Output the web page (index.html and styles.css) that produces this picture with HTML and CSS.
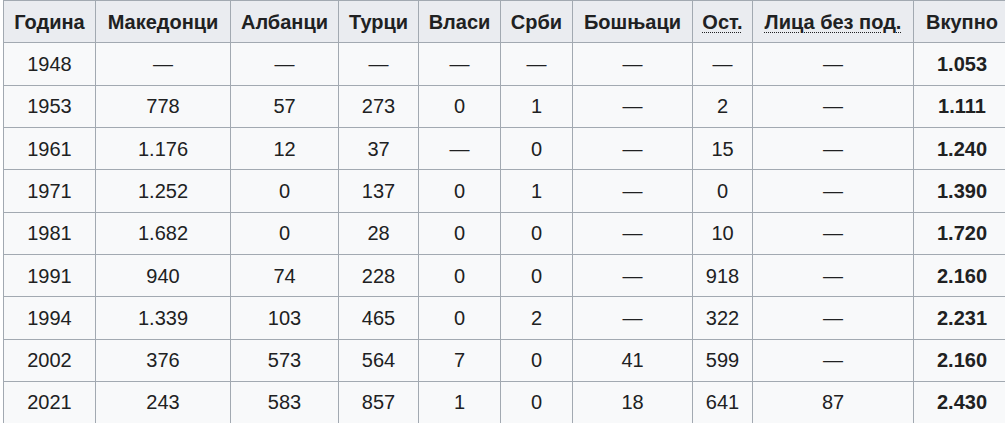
FILE: index.html
```html
<!DOCTYPE html>
<html lang="mk">
<head>
<meta charset="utf-8">
<title>Население</title>
<link rel="stylesheet" href="styles.css">
</head>
<body>
<table class="wikitable">
  <colgroup>
    <col class="c-year">
    <col class="c-mk">
    <col class="c-al">
    <col class="c-tr">
    <col class="c-vl">
    <col class="c-sr">
    <col class="c-bo">
    <col class="c-ost">
    <col class="c-bez">
    <col class="c-total">
  </colgroup>
  <thead>
    <tr>
      <th>Година</th>
      <th>Македонци</th>
      <th>Албанци</th>
      <th>Турци</th>
      <th>Власи</th>
      <th>Срби</th>
      <th>Бошњаци</th>
      <th><abbr class="abbr" title="Останати">Ост.</abbr></th>
      <th><abbr class="abbr" title="Лица без податок">Лица без под.</abbr></th>
      <th>Вкупно</th>
    </tr>
  </thead>
  <tbody>
    <tr><td>1948</td><td>—</td><td>—</td><td>—</td><td>—</td><td>—</td><td>—</td><td>—</td><td>—</td><td class="total">1.053</td></tr>
    <tr><td>1953</td><td>778</td><td>57</td><td>273</td><td>0</td><td>1</td><td>—</td><td>2</td><td>—</td><td class="total">1.111</td></tr>
    <tr><td>1961</td><td>1.176</td><td>12</td><td>37</td><td>—</td><td>0</td><td>—</td><td>15</td><td>—</td><td class="total">1.240</td></tr>
    <tr><td>1971</td><td>1.252</td><td>0</td><td>137</td><td>0</td><td>1</td><td>—</td><td>0</td><td>—</td><td class="total">1.390</td></tr>
    <tr><td>1981</td><td>1.682</td><td>0</td><td>28</td><td>0</td><td>0</td><td>—</td><td>10</td><td>—</td><td class="total">1.720</td></tr>
    <tr><td>1991</td><td>940</td><td>74</td><td>228</td><td>0</td><td>0</td><td>—</td><td>918</td><td>—</td><td class="total">2.160</td></tr>
    <tr><td>1994</td><td>1.339</td><td>103</td><td>465</td><td>0</td><td>2</td><td>—</td><td>322</td><td>—</td><td class="total">2.231</td></tr>
    <tr><td>2002</td><td>376</td><td>573</td><td>564</td><td>7</td><td>0</td><td>41</td><td>599</td><td>—</td><td class="total">2.160</td></tr>
    <tr><td>2021</td><td>243</td><td>583</td><td>857</td><td>1</td><td>0</td><td>18</td><td>641</td><td>87</td><td class="total">2.430</td></tr>
  </tbody>
</table>
</body>
</html>
```

FILE: styles.css
```css
html, body {
  margin: 0;
  padding: 0;
  background: #ffffff;
}

body {
  padding-left: 3px;
  font-family: "Liberation Sans", Arial, sans-serif;
  font-size: 20px;
  color: #202122;
  overflow: hidden;
}

.wikitable {
  border-collapse: collapse;
  table-layout: fixed;
  width: 1007px;
  background: #f8f9fa;
  color: #202122;
  border: 1px solid #a2a9b1;
}

.wikitable th,
.wikitable td {
  border: 1px solid #a2a9b1;
  padding: 4.67px 8px;
  line-height: 32px;
  text-align: center;
  white-space: nowrap;
  overflow: hidden;
}

.wikitable th {
  background: #eaecf0;
  font-weight: bold;
}

.wikitable td.total {
  font-weight: bold;
}

.abbr {
  text-decoration: underline dotted;
  text-underline-offset: 3px;
  text-decoration-thickness: 1px;
  cursor: help;
}

.c-year { width: 92px; }
.c-mk { width: 135px; }
.c-al { width: 108px; }
.c-tr { width: 80px; }
.c-vl { width: 82px; }
.c-sr { width: 72px; }
.c-bo { width: 120px; }
.c-ost { width: 60px; }
.c-bez { width: 161px; }
.c-total { width: 97px; }
```
